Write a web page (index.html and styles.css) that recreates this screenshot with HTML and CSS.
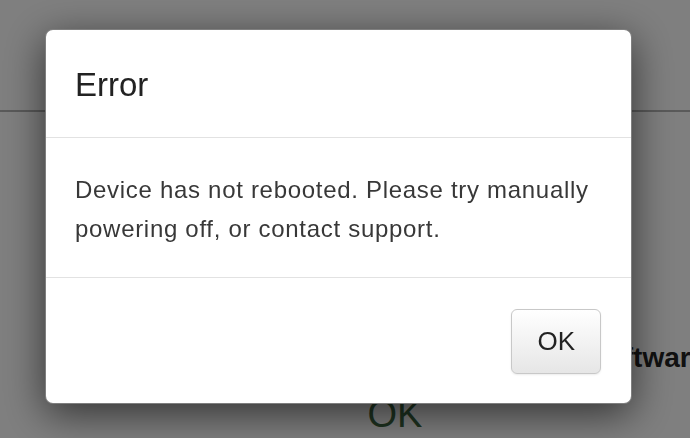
FILE: index.html
```html
<!DOCTYPE html>
<html lang="en">
<head>
    <meta charset="UTF-8">
    <title>Firmware Update</title>
    <meta name="viewport" content="width=device-width, initial-scale=1.0">
    <link rel="stylesheet" href="styles.css">
</head>
<body>
    <header class="topbar"></header>
    <main class="page">
        <h2 class="section-title">Software</h2>
        <p class="status">OK</p>
    </main>

    <div class="backdrop"></div>
    <div class="modal">
        <div class="modal-header">
            <h3>Error</h3>
        </div>
        <div class="modal-body">
            <p>Device has not rebooted. Please try manually powering off, or contact support.</p>
        </div>
        <div class="modal-footer">
            <button class="btn">OK</button>
        </div>
    </div>
</body>
</html>
```

FILE: styles.css
```css
body {
    margin: 0;
    font-family: "Liberation Sans", Arial, sans-serif;
    background-color: #fff;
    overflow: hidden;
}
.topbar {
    height: 110px;
    border-bottom: 2px solid #b4b4b4;
}
.page {
    padding-top: 229px;
}
.section-title {
    margin: 0 0 0 588px;
    font-size: 28px;
    font-weight: bold;
    color: #222;
    white-space: nowrap;
    line-height: 34px;
}
.status {
    margin: 17px 0 0;
    padding-left: 100px;
    text-align: center;
    font-size: 38px;
    line-height: 44px;
    color: #3c6640;
}
.backdrop {
    position: fixed;
    top: 0;
    left: 0;
    right: 0;
    bottom: 0;
    background-color: rgba(0, 0, 0, 0.5);
}
.modal {
    position: fixed;
    top: 29px;
    left: 45px;
    width: 585px;
    background-color: #fff;
    border: 1px solid rgba(0, 0, 0, 0.5);
    border-radius: 8px;
    box-shadow: 0 10px 40px rgba(0, 0, 0, 0.6);
}
.modal-header {
    padding: 35px 29px 32px;
    border-bottom: 1px solid #e2e2e2;
}
.modal-header h3 {
    margin: 0;
    font-size: 33px;
    font-weight: normal;
    line-height: 40px;
    color: #222;
}
.modal-body {
    padding: 32px 29px 29px;
    border-bottom: 1px solid #e2e2e2;
}
.modal-body p {
    margin: 0;
    font-size: 24px;
    letter-spacing: 0.7px;
    line-height: 39px;
    color: #383838;
}
.modal-footer {
    display: flex;
    justify-content: flex-end;
    padding: 31px 30px 29px;
}
.btn {
    font-family: "Liberation Sans", Arial, sans-serif;
    font-size: 26px;
    line-height: 31px;
    padding: 16px 25px;
    color: #222;
    background: linear-gradient(#ffffff, #e6e6e6);
    border: 1px solid #c8c8c8;
    border-radius: 6px;
    box-shadow: 0 1px 2px rgba(0, 0, 0, 0.08);
}
```
